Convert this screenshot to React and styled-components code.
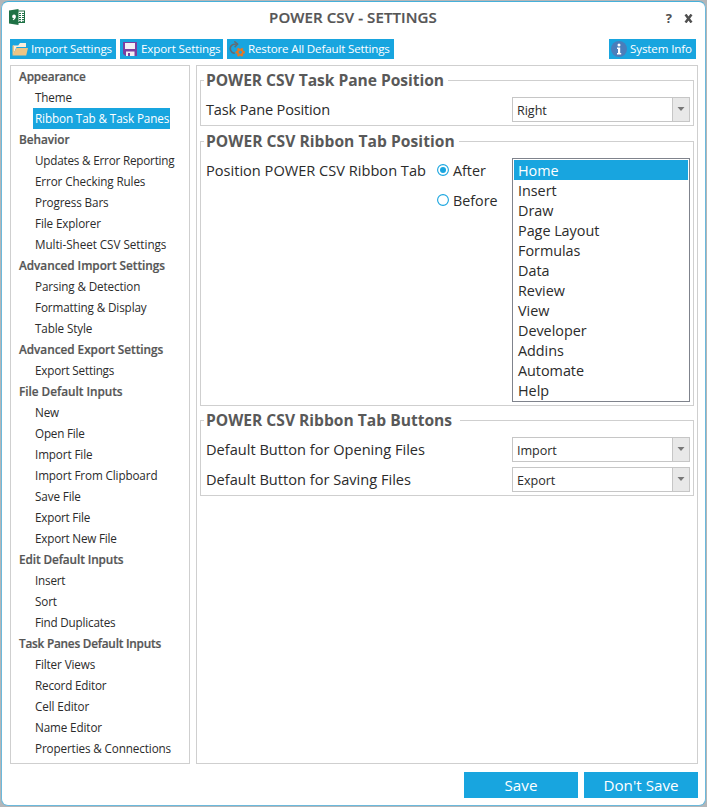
import React, { useState } from 'react';
import styled, { createGlobalStyle, css } from 'styled-components';

const BLUE = '#18a5df';

const GlobalStyle = createGlobalStyle`
  * { box-sizing: border-box; }
  body { margin: 0; background: #b4b6b8; overflow: hidden; }
  button { font: inherit; border: 0; padding: 0; margin: 0; }
`;

const Window = styled.div`
  display: flex;
  flex-direction: column;
  width: 707px;
  height: 807px;
  padding: 1px;
  background: #b4b6b8;
  font-family: "Open Sans", "Noto Sans", sans-serif;
  color: #2b2b2b;
`;

const Frame = styled.div`
  flex: 1;
  display: flex;
  flex-direction: column;
  border: 1px solid #6bb9dc;
  border-top-color: #45b0da;
  border-radius: 7px;
  background: #fff;
  padding: 0 7px 0 8px;
`;

const TitleBar = styled.header`
  display: grid;
  grid-template-columns: 60px 1fr 60px;
  align-items: center;
  height: 37px;
  padding-bottom: 5px;
`;

const Logo = styled.svg`
  display: block;
  width: 16px;
  height: 16px;
  margin: 0 0 3px -1px;
`;

const Title = styled.h1`
  margin: 0 2px 2px 0;
  text-align: center;
  font-size: 15px;
  font-weight: 600;
  line-height: 20px;
  letter-spacing: 0.1px;
  color: #555;
  -webkit-text-stroke: 0.2px #555;
`;

const Controls = styled.div`
  display: flex;
  justify-content: flex-end;
  align-items: center;
  gap: 12px;
  padding: 0 5px 0 0;
`;

const Control = styled.button`
  display: flex;
  background: none;
  color: #505050;
  font-size: 13px;
  font-weight: 700;
  line-height: 16px;
`;

const Toolbar = styled.div`
  display: flex;
  gap: 4px;
  height: 20px;
`;

const Spacer = styled.div`
  flex: 1;
`;

const ToolButton = styled.button`
  display: flex;
  align-items: center;
  gap: 3px;
  width: ${(p) => p.$width}px;
  height: 20px;
  margin-right: ${(p) => p.$inset ?? 0}px;
  padding-left: 2px;
  background: ${BLUE};
  color: #fff;
  font-size: 11.6px;
  line-height: 20px;
  letter-spacing: ${(p) => p.$spacing ?? -0.13}px;
  white-space: nowrap;

  svg {
    width: 16px;
    height: 16px;
    flex: none;
  }
`;

const Body = styled.main`
  display: flex;
  gap: 6px;
  height: 699px;
  margin-top: 6px;
`;

const Sidebar = styled.nav`
  width: 180px;
  border: 1px solid #cfcfcf;
  padding-left: 8px;
`;

const itemText = css`
  height: 21px;
  line-height: 21px;
  white-space: nowrap;
`;

const SectionName = styled.div`
  ${itemText}
  font-size: 11.8px;
  font-weight: 600;
  letter-spacing: ${(p) => p.$spacing ?? -0.03}px;
  color: #555;
  -webkit-text-stroke: 0.2px #555;
`;

const SectionItem = styled.div`
  ${itemText}
  width: fit-content;
  margin-left: 14px;
  padding: 0 2px;
  font-size: 11.7px;
  letter-spacing: ${(p) => p.$spacing ?? -0.12}px;
  ${(p) => p.$active && css`
    width: 137px;
    background: ${BLUE};
    color: #fff;
  `}
`;

const Content = styled.section`
  flex: 1;
  border: 1px solid #cfcfcf;
  padding: 4px 3px;
`;

const Group = styled.fieldset`
  min-width: 0;
  height: ${(p) => p.$height}px;
  margin: 0 0 ${(p) => p.$after ?? 5}px;
  padding: 6px 3px 0 5px;
  border: 1px solid #cfcfcf;
`;

const Legend = styled.legend`
  width: ${(p) => p.$width}px;
  height: 21px;
  margin-left: -2px;
  padding: 0 0 0 2px;
  font-size: 15.6px;
  font-weight: 700;
  line-height: 20px;
  letter-spacing: ${(p) => p.$spacing ?? 0}px;
  white-space: nowrap;
  color: #595959;
`;

const Row = styled.div`
  display: flex;
  justify-content: space-between;
  align-items: flex-start;
  height: 25px;
  margin-bottom: 5px;
`;

const Label = styled.span`
  font-size: 14.6px;
  line-height: 24px;
  letter-spacing: ${(p) => p.$spacing ?? 0}px;
  white-space: nowrap;
`;

const Select = styled.div`
  display: flex;
  width: 178px;
  height: 25px;
  border: 1px solid #c6c6c6;
  font-size: 12.6px;
  line-height: 25px;
`;

const SelectValue = styled.span`
  flex: 1;
  padding-left: 4px;
  letter-spacing: -0.05px;
`;

const SelectArrow = styled.span`
  display: flex;
  justify-content: center;
  width: 17px;
  padding-top: 9px;
  border-left: 1px solid #c6c6c6;
  background: #e8e8e8;
`;

const PositionRow = styled.div`
  display: flex;
  align-items: flex-start;
`;

const PositionLabel = styled(Label)`
  width: 231px;
`;

const Radios = styled.div`
  display: flex;
  flex-direction: column;
  gap: 6px;
  flex: 1;
`;

const RadioOption = styled.label`
  display: flex;
  align-items: center;
  gap: 4px;
  font-size: 14.3px;
  line-height: 24px;

  svg {
    width: 12px;
    height: 12px;
  }
`;

const RadioText = styled.span`
  padding-top: 1px;
  line-height: 23px;
`;

const ListBox = styled.div`
  width: 178px;
  height: 244px;
  padding: 1px;
  border: 1px solid #7f838c;
`;

const ListItem = styled.div`
  height: 20px;
  padding-left: 4px;
  font-size: 14.4px;
  line-height: 22px;
  letter-spacing: -0.03px;
  ${(p) => p.$active && css`
    background: ${BLUE};
    color: #fff;
  `}
`;

const Footer = styled.footer`
  display: flex;
  justify-content: flex-end;
  gap: 6px;
  margin-top: 8px;
`;

const FooterButton = styled.button`
  width: 114px;
  height: 26px;
  padding-bottom: 1px;
  background: ${BLUE};
  color: #fff;
  font-size: 15.2px;
  line-height: 24px;
`;

const SECTIONS = [
  { name: 'Appearance', spacing: -0.15, items: [['Theme'], ['Ribbon Tab & Task Panes']] },
  {
    name: 'Behavior',
    items: [
      ['Updates & Error Reporting', -0.2],
      ['Error Checking Rules'],
      ['Progress Bars'],
      ['File Explorer'],
      ['Multi-Sheet CSV Settings', -0.05],
    ],
  },
  { name: 'Advanced Import Settings', items: [['Parsing & Detection'], ['Formatting & Display'], ['Table Style']] },
  { name: 'Advanced Export Settings', items: [['Export Settings', -0.2]] },
  {
    name: 'File Default Inputs',
    items: [['New'], ['Open File', -0.2], ['Import File'], ['Import From Clipboard'], ['Save File'], ['Export File', -0.2], ['Export New File', -0.2]],
  },
  { name: 'Edit Default Inputs', spacing: -0.1, items: [['Insert', -0.2], ['Sort'], ['Find Duplicates', -0.2]] },
  {
    name: 'Task Panes Default Inputs',
    spacing: -0.23,
    items: [['Filter Views'], ['Record Editor', -0.2], ['Cell Editor'], ['Name Editor'], ['Properties & Connections']],
  },
];

const TABS = ['Home', 'Insert', 'Draw', 'Page Layout', 'Formulas', 'Data', 'Review', 'View', 'Developer', 'Addins', 'Automate', 'Help'];

const AppLogo = () => (
  <Logo viewBox="0 0 16 16">
    <rect x="8.5" y="2" width="7" height="11.500" fill="#fff" stroke="#1e7145" />
    <path d="M10 4.500h2M13 4.500h2M10 6.500h2M13 6.500h2M10 8.500h2M13 8.500h2M10 10.500h2M13 10.500h2M10 12.300h2M13 12.300h2" stroke="#1e7145" />
    <path d="M0 1.500 9.500 0v16L0 14.500z" fill="#1e7145" />
    <path d="M5 5.600a1.900 1.900 0 0 1 1.900 2C6.900 9.400 5.600 10.900 4 11.200l-.2-.9c.8-.2 1.100-.6 1.200-1A1.800 1.800 0 0 1 5 5.600z" fill="#fff" />
  </Logo>
);

const FolderIcon = () => (
  <svg viewBox="0 0 16 16">
    <path d="M1 14V4.500h5.200L8 2h6v4H4.500z" fill="#fbeedb" />
    <path d="M.5 14.500 4.300 7H16l-1.800 7.500z" fill="#edc584" />
    <path d="M.5 14.500V4.500H2V11z" fill="#edc584" />
  </svg>
);

const SaveIcon = () => (
  <svg viewBox="0 0 16 16">
    <path d="M1 1h14v14H3.500L1 12.800z" fill="#7b3fa0" />
    <path d="M3 2h10v6H3z" fill="#f3f0f5" />
    <path d="M4 10.500h8.500V15H4z" fill="#f3f0f5" />
    <path d="M6 12h2v3H6z" fill="#7b3fa0" />
  </svg>
);

const teeth = [0, 60, 120, 180, 240, 300];

const RestoreIcon = () => (
  <svg viewBox="0 0 16 16">
    <path d="M5.800 12.300A4.700 4.700 0 0 1 2.400 4.600C3.700 3.100 5 3 7.500 3" fill="none" stroke="#666b70" strokeWidth="1.600" />
    <path d="M5.300 .4 8.600 3 5.600 6.200" fill="none" stroke="#666b70" strokeWidth="1.500" />
    {teeth.map((a) => (
      <rect key={a} x="10.100" y="6.700" width="2.200" height="2.800" fill="#e87722" transform={`rotate(${a + 30} 11.200 11.300)`} />
    ))}
    <circle cx="11.200" cy="11.300" r="2.600" fill="none" stroke="#e87722" strokeWidth="1.700" />
  </svg>
);

const InfoIcon = () => (
  <svg viewBox="0 0 16 16">
    <circle cx="8" cy="8" r="8" fill="#4a7ebb" />
    <circle cx="8" cy="4" r="1.500" fill="#fff" />
    <path d="M6 6.500h3.200v5.500h1V13.500H6V12h1V8H6z" fill="#fff" />
  </svg>
);

const CloseIcon = () => (
  <svg width="9" height="9" viewBox="0 0 9 9">
    <path d="M1.500 .5 7.500 8.500M7.500 .5 1.500 8.500" stroke="#505050" strokeWidth="2.500" />
  </svg>
);

const Radio = ({ label, checked, onSelect }) => (
  <RadioOption onClick={onSelect}>
    <svg viewBox="0 0 12 12">
      <circle cx="6" cy="6" r="5.400" fill="#fff" stroke={BLUE} strokeWidth="1.100" />
      {checked && <circle cx="6" cy="6" r="3" fill={BLUE} />}
    </svg>
    <RadioText>{label}</RadioText>
  </RadioOption>
);

const Dropdown = ({ value }) => (
  <Select>
    <SelectValue>{value}</SelectValue>
    <SelectArrow>
      <svg width="8" height="4" viewBox="0 0 8 4">
        <path d="M.5 0h7L4 4z" fill="#777" />
      </svg>
    </SelectArrow>
  </Select>
);

export default function App() {
  const [page, setPage] = useState('Ribbon Tab & Task Panes');
  const [placement, setPlacement] = useState('After');
  const [tab, setTab] = useState('Home');

  return (
    <>
      <GlobalStyle />
      <Window>
        <Frame>
          <TitleBar>
            <AppLogo />
            <Title>POWER CSV - SETTINGS</Title>
            <Controls>
              <Control>?</Control>
              <Control><CloseIcon /></Control>
            </Controls>
          </TitleBar>

          <Toolbar>
            <ToolButton $width={106}><FolderIcon />Import Settings</ToolButton>
            <ToolButton $width={103}><SaveIcon />Export Settings</ToolButton>
            <ToolButton $width={167} $spacing={-0.16}><RestoreIcon />Restore All Default Settings</ToolButton>
            <Spacer />
            <ToolButton $width={87} $inset={2}><InfoIcon />System Info</ToolButton>
          </Toolbar>

          <Body>
            <Sidebar>
              {SECTIONS.map((s) => (
                <React.Fragment key={s.name}>
                  <SectionName $spacing={s.spacing}>{s.name}</SectionName>
                  {s.items.map(([label, spacing]) => (
                    <SectionItem key={label} $spacing={spacing} $active={page === label} onClick={() => setPage(label)}>
                      {label}
                    </SectionItem>
                  ))}
                </React.Fragment>
              ))}
            </Sidebar>

            <Content>
              <Group $height={56}>
                <Legend $width={244} $spacing={-0.04}>POWER CSV Task Pane Position</Legend>
                <Row>
                  <Label $spacing={-0.18}>Task Pane Position</Label>
                  <Dropdown value="Right" />
                </Row>
              </Group>

              <Group $height={275} $after={4}>
                <Legend $width={255} $spacing={0.04}>POWER CSV Ribbon Tab Position</Legend>
                <PositionRow>
                  <PositionLabel>Position POWER CSV Ribbon Tab</PositionLabel>
                  <Radios>
                    {['After', 'Before'].map((p) => (
                      <Radio key={p} label={p} checked={placement === p} onSelect={() => setPlacement(p)} />
                    ))}
                  </Radios>
                  <ListBox>
                    {TABS.map((t) => (
                      <ListItem key={t} $active={tab === t} onClick={() => setTab(t)}>{t}</ListItem>
                    ))}
                  </ListBox>
                </PositionRow>
              </Group>

              <Group $height={86}>
                <Legend $width={256}>POWER CSV Ribbon Tab Buttons</Legend>
                <Row>
                  <Label>Default Button for Opening Files</Label>
                  <Dropdown value="Import" />
                </Row>
                <Row>
                  <Label>Default Button for Saving Files</Label>
                  <Dropdown value="Export" />
                </Row>
              </Group>
            </Content>
          </Body>

          <Footer>
            <FooterButton>Save</FooterButton>
            <FooterButton>Don't Save</FooterButton>
          </Footer>
        </Frame>
      </Window>
    </>
  );
}
